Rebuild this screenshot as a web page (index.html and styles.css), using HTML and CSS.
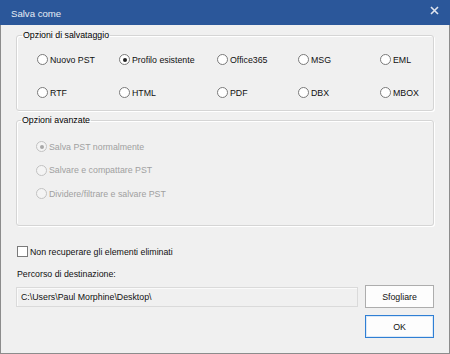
FILE: index.html
```html
<!DOCTYPE html>
<html>
<head>
    <title>Salva come</title>
    <link rel="stylesheet" href="styles.css">
</head>
<body>
    <div class="dialog">
        <div class="titlebar">
            <span class="title">Salva come</span>
            <svg class="close" width="9" height="9" viewBox="0 0 9 9">
                <path d="M1 1 L8 8 M8 1 L1 8" stroke="#dfe4ee" stroke-width="1.6" fill="none"/>
            </svg>
        </div>
        <div class="content">
            <fieldset class="group">
                <legend>Opzioni di salvataggio</legend>
                <div class="format-grid">
                    <label class="radio"><span class="dot"></span>Nuovo PST</label>
                    <label class="radio"><span class="dot checked"></span>Profilo esistente</label>
                    <label class="radio"><span class="dot"></span>Office365</label>
                    <label class="radio"><span class="dot"></span>MSG</label>
                    <label class="radio"><span class="dot"></span>EML</label>
                    <label class="radio"><span class="dot"></span>RTF</label>
                    <label class="radio"><span class="dot"></span>HTML</label>
                    <label class="radio"><span class="dot"></span>PDF</label>
                    <label class="radio"><span class="dot"></span>DBX</label>
                    <label class="radio"><span class="dot"></span>MBOX</label>
                </div>
            </fieldset>
            <fieldset class="group advanced">
                <legend>Opzioni avanzate</legend>
                <div class="adv-list">
                    <label class="radio disabled"><span class="dot checked"></span>Salva PST normalmente</label>
                    <label class="radio disabled"><span class="dot"></span>Salvare e compattare PST</label>
                    <label class="radio disabled"><span class="dot"></span>Dividere/filtrare e salvare PST</label>
                </div>
            </fieldset>
            <label class="check"><span class="box"></span>Non recuperare gli elementi eliminati</label>
            <div class="path-label">Percorso di destinazione:</div>
            <div class="path-row">
                <div class="path-field">C:\Users\Paul Morphine\Desktop\</div>
                <button class="btn">Sfogliare</button>
            </div>
            <div class="actions">
                <button class="btn primary">OK</button>
            </div>
        </div>
    </div>
</body>
</html>
```

FILE: styles.css
```css
body {
    margin: 0;
    padding: 0;
    background-color: #f0f0f0;
    font-family: "Liberation Sans", Arial, sans-serif;
    font-size: 8.8px;
    color: #111;
}
.dialog {
    box-sizing: border-box;
    width: 450px;
    height: 354px;
    background-color: #f0f0f0;
    border: 1px solid #8c8c8c;
    border-top: 0;
}
.titlebar {
    height: 25px;
    margin: 0 -1px;
    background-color: #2b579a;
    color: #e8edf5;
    display: flex;
    align-items: center;
    justify-content: space-between;
    padding: 0 11px 4px 11px;
    box-sizing: border-box;
}
.title {
    font-size: 9.6px;
    padding-top: 6px;
}
.content {
    padding: 4px 15px 0 15px;
}
.group {
    margin: 0;
    padding: 12px 0 11px 20px;
    border: 1px solid #d5d5d5;
    border-radius: 3px;
    box-shadow: inset 1px 1px 0 #fff, 1px 1px 0 #fff;
}
.group legend {
    margin-left: -15px;
    padding: 0 1px;
    height: 12px;
    line-height: 12px;
    color: #000;
}
.format-grid {
    display: grid;
    grid-template-columns: 82px 98px 81px 82px auto;
    row-gap: 20px;
}
.radio {
    display: flex;
    align-items: center;
    height: 13px;
    gap: 2px;
    white-space: nowrap;
}
.dot {
    box-sizing: border-box;
    width: 11px;
    height: 11px;
    border: 1px solid #7a7a7a;
    border-radius: 50%;
    background-color: #fff;
    position: relative;
}
.dot.checked::after {
    content: "";
    position: absolute;
    left: 2.5px;
    top: 2.5px;
    width: 4px;
    height: 4px;
    border-radius: 50%;
    background-color: #222;
}
.advanced {
    margin-top: 3px;
    padding: 14px 0 25px 19px;
}
.adv-list {
    display: flex;
    flex-direction: column;
    gap: 10.5px;
}
.radio.disabled {
    color: #a0a0a0;
}
.radio.disabled .dot {
    border-color: #c2c2c2;
    background-color: #f4f4f4;
}
.radio.disabled .dot.checked::after {
    background-color: #a8a8a8;
}
.check {
    display: flex;
    align-items: center;
    gap: 2px;
    height: 13px;
    margin: 19px 0 0 1px;
}
.box {
    box-sizing: border-box;
    width: 11px;
    height: 11px;
    border: 1px solid #7a7a7a;
    background-color: #fff;
}
.path-label {
    margin: 10px 0 0 1px;
    height: 12px;
    line-height: 12px;
}
.path-row {
    display: flex;
    align-items: center;
    gap: 7px;
    margin-top: 5px;
}
.path-field {
    flex: 1;
    box-sizing: border-box;
    height: 20px;
    line-height: 18px;
    padding-left: 4px;
    border: 1px solid #dadada;
    background-color: #f0f0f0;
    box-shadow: inset 1px 1px 0 #fafafa;
}
.btn {
    box-sizing: border-box;
    width: 69px;
    height: 23px;
    padding: 0;
    font-family: "Liberation Sans", Arial, sans-serif;
    font-size: 8.8px;
    color: #111;
    background-color: #fdfdfd;
    border: 1px solid #adadad;
}
.btn.primary {
    border-color: #2f7fd4;
    box-shadow: inset 0 0 0 1px #dbe9f8;
}
.actions {
    display: flex;
    justify-content: flex-end;
    margin-top: 7px;
}
```
